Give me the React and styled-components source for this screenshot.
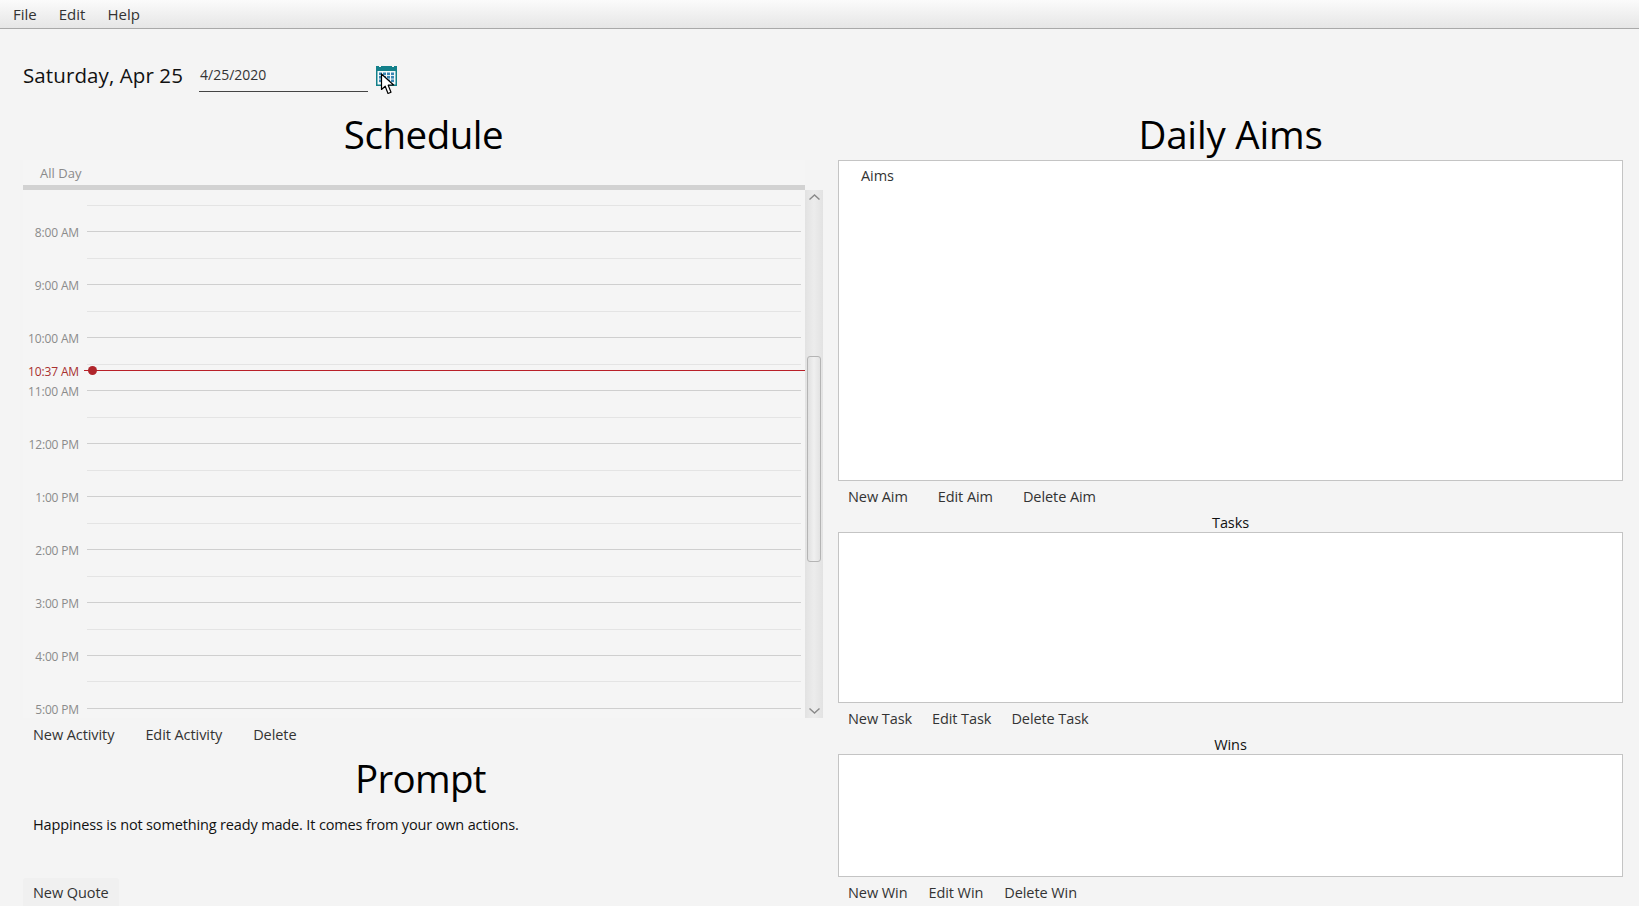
import React from "react";
import styled, { createGlobalStyle } from "styled-components";

const Global = createGlobalStyle`
  html, body { margin: 0; padding: 0; background: #f4f4f4; }
  body { font-family: "Open Sans", "Noto Sans", sans-serif; overflow: hidden; }
  #root { height: 906px; }
`;

const Page = styled.div`
  width: 1639px;
  height: 906px;
  overflow: hidden;
  display: flex;
  flex-direction: column;
  background: #f4f4f4;
`;

const MenuBar = styled.div`
  height: 29px;
  flex: none;
  display: flex;
  align-items: center;
  padding: 0 0 1px 13px;
  box-sizing: border-box;
  gap: 22px;
  background: linear-gradient(#fbfbfb, #e6e6e6);
  border-bottom: 1px solid #a9a9a9;
`;

const MenuItem = styled.span`
  font-size: 15px;
  color: #333;
  line-height: 26px;
`;

const Header = styled.div`
  height: 81px;
  flex: none;
  display: flex;
  align-items: flex-start;
  padding: 31px 0 0 23px;
  box-sizing: border-box;
`;

const DateLabel = styled.div`
  font-size: 20.5px;
  letter-spacing: 0.1px;
  line-height: 30px;
  width: 176px;
  flex: none;
  color: #111;
`;

const DateField = styled.div`
  width: 169px;
  height: 32px;
  flex: none;
  box-sizing: border-box;
  border-bottom: 1.5px solid #444;
  padding: 1px 0 0 1px;
  font-size: 14px;
  line-height: 28px;
  color: #333;
`;

const PickerButton = styled.div`
  position: relative;
  width: 21px;
  height: 21px;
  margin: 5px 0 0 8px;
  flex: none;
`;

const CursorMark = styled.svg`
  position: absolute;
  left: 4px;
  top: 8px;
`;

const Columns = styled.div`
  flex: 1;
  min-height: 0;
  display: grid;
  grid-template-columns: 800px 785px;
  column-gap: 15px;
  padding-left: 23px;
`;

const Column = styled.div`
  display: flex;
  flex-direction: column;
  min-height: 0;
`;

const Title = styled.div`
  height: 50px;
  flex: none;
  text-align: center;
  font-size: 38.5px;
  letter-spacing: ${(p) => p.$track ?? -0.5}px;
  line-height: 48px;
  color: #000;
`;

const ScheduleTitle = styled(Title)`
  margin-left: 1px;
`;

const AllDayRow = styled.div`
  height: 25px;
  width: 782px;
  flex: none;
  box-sizing: border-box;
  padding: 2px 0 0 17px;
  font-size: 13px;
  letter-spacing: 0.05px;
  line-height: 22px;
  color: #8b8b8b;
  background: #f5f5f5;
`;

const Divider = styled.div`
  width: 782px;
  height: 5px;
  flex: none;
  background: #d2d2d2;
`;

const ScheduleBody = styled.div`
  height: 528px;
  flex: none;
  display: flex;
`;

const Viewport = styled.div`
  position: relative;
  width: 782px;
  flex: none;
  overflow: hidden;
  padding-top: 15px;
  box-sizing: border-box;
  background: #f5f5f5;
`;

const Slot = styled.div`
  height: 26.47px;
  display: flex;
  align-items: flex-start;
`;

const SlotLabel = styled.div`
  width: 56px;
  flex: none;
  height: 18px;
  margin-top: -7px;
  text-align: right;
  font-size: 12px;
  letter-spacing: -0.15px;
  line-height: 18px;
  color: #8b8b8b;
`;

const SlotLine = styled.div`
  flex: 1;
  margin: 0 4px 0 8px;
  border-top: 1px solid ${(p) => (p.$major ? "#cfcfcf" : "#e4e4e4")};
`;

const NowMarker = styled.div`
  position: absolute;
  left: 0;
  right: 0;
  height: 18px;
  margin-top: -9px;
  display: flex;
  align-items: center;
`;

const NowLabel = styled.div`
  width: 56px;
  flex: none;
  padding-top: 3px;
  text-align: right;
  font-size: 12px;
  letter-spacing: -0.15px;
  line-height: 18px;
  color: #a8302f;
`;

const NowLine = styled.div`
  position: relative;
  flex: 1;
  margin-left: 5px;
  height: 1px;
  background: #b92028;
  &::before {
    content: "";
    position: absolute;
    left: 4px;
    top: -4px;
    width: 9px;
    height: 9px;
    border-radius: 50%;
    background: #b0252b;
  }
`;

const ScrollTrack = styled.div`
  width: 18px;
  flex: none;
  display: flex;
  flex-direction: column;
  align-items: center;
  background: linear-gradient(90deg, #e2e2e2, #ececec 50%, #e2e2e2);
`;

const ArrowCell = styled.div`
  height: 14px;
  flex: none;
  display: flex;
  align-items: center;
  justify-content: center;
  margin-top: ${(p) => (p.$end ? "auto" : "0")};
`;

const Thumb = styled.div`
  width: 14px;
  height: 206px;
  flex: none;
  margin-top: 152px;
  box-sizing: border-box;
  border: 1.5px solid #b4b4b4;
  border-radius: 3px;
  background: linear-gradient(90deg, #e0e0e0, #f0f0f0 50%, #e2e2e2);
`;

const ButtonRow = styled.div`
  height: ${(p) => p.$h || 32}px;
  flex: none;
  display: flex;
  align-items: center;
  gap: ${(p) => p.$gap ?? 0}px;
`;

const TextButton = styled.div`
  padding: 0 10px;
  font-size: 14.5px;
  letter-spacing: -0.08px;
  line-height: 30px;
  color: #333;
  white-space: nowrap;
`;

const PromptTitle = styled(Title)`
  height: 48px;
  margin: 3px 0 0 -5px;
  letter-spacing: -0.7px;
`;

const Quote = styled.div`
  margin-top: 11px;
  padding-left: 10px;
  font-size: 14.5px;
  letter-spacing: -0.15px;
  line-height: 24px;
  color: #111;
`;

const QuoteButton = styled(TextButton)`
  align-self: flex-start;
  margin-top: 41px;
  background: #f0f0f0;
  border-radius: 3px 3px 0 0;
`;

const ListBox = styled.div`
  height: ${(p) => p.$h}px;
  flex: none;
  box-sizing: border-box;
  background: #fff;
  border: 1px solid #c4c4c4;
  padding: 6px 0 0 22px;
  font-size: 14.5px;
  letter-spacing: -0.1px;
  line-height: 18px;
  color: #333;
`;

const SectionLabel = styled.div`
  height: 19px;
  flex: none;
  text-align: center;
  font-size: 14.5px;
  letter-spacing: -0.1px;
  line-height: 19px;
  color: #111;
`;

const CalendarIcon = () => (
  <svg width="21" height="21" viewBox="0 0 21 21">
    <rect x="0" y="1" width="21" height="20" fill="#13808a" />
    <rect x="3" y="0" width="2" height="2" fill="#f4f4f4" />
    <rect x="16" y="0" width="2" height="2" fill="#f4f4f4" />
    <rect x="1.5" y="6" width="18" height="13.5" fill="#f6fafa" />
    {[7.5, 11, 14.5].map((y) =>
      [3, 7, 11, 15].map((x) => (
        <rect key={`${x}-${y}`} x={x} y={y} width="3" height="2.6" fill="#3a86b4" />
      ))
    )}
  </svg>
);

const Chevron = ({ up }) => (
  <svg width="11" height="6" viewBox="0 0 11 6">
    <path d={up ? "M0.5 5.5 L5.5 1 L10.5 5.5" : "M0.5 0.5 L5.5 5 L10.5 0.5"} fill="none" stroke="#8a8a8a" strokeWidth="1.4" />
  </svg>
);

const hours = ["8:00 AM", "9:00 AM", "10:00 AM", "11:00 AM", "12:00 PM", "1:00 PM", "2:00 PM", "3:00 PM", "4:00 PM", "5:00 PM"];
const HOUR_HEIGHT = 52.94;
const nowTop = 15 + 26.47 + (10 + 37 / 60 - 8) * HOUR_HEIGHT + 0.5;

export default function App() {
  return (
    <Page>
      <Global />
      <MenuBar>
        <MenuItem>File</MenuItem>
        <MenuItem>Edit</MenuItem>
        <MenuItem>Help</MenuItem>
      </MenuBar>
      <Header>
        <DateLabel>Saturday, Apr 25</DateLabel>
        <DateField>4/25/2020</DateField>
        <PickerButton>
          <CalendarIcon />
          <CursorMark width="15" height="22" viewBox="0 0 15 22">
            <path d="M1.5 1 L1.5 16.5 L5.2 13.2 L8 20.5 L11 19.2 L8.2 12.2 L13.6 12 Z" fill="#fff" stroke="#000" strokeWidth="1.2" strokeLinejoin="round" />
          </CursorMark>
        </PickerButton>
      </Header>
      <Columns>
        <Column>
          <ScheduleTitle>Schedule</ScheduleTitle>
          <AllDayRow>All Day</AllDayRow>
          <Divider />
          <ScheduleBody>
            <Viewport>
              <Slot>
                <SlotLabel />
                <SlotLine />
              </Slot>
              {hours.map((h) => (
                <React.Fragment key={h}>
                  <Slot>
                    <SlotLabel>{h}</SlotLabel>
                    <SlotLine $major />
                  </Slot>
                  <Slot>
                    <SlotLabel />
                    <SlotLine />
                  </Slot>
                </React.Fragment>
              ))}
              <NowMarker style={{ top: nowTop }}>
                <NowLabel>10:37 AM</NowLabel>
                <NowLine />
              </NowMarker>
            </Viewport>
            <ScrollTrack>
              <ArrowCell><Chevron up /></ArrowCell>
              <Thumb />
              <ArrowCell $end><Chevron /></ArrowCell>
            </ScrollTrack>
          </ScheduleBody>
          <ButtonRow $h={33} $gap={11}>
            <TextButton>New Activity</TextButton>
            <TextButton>Edit Activity</TextButton>
            <TextButton>Delete</TextButton>
          </ButtonRow>
          <PromptTitle>Prompt</PromptTitle>
          <Quote>Happiness is not something ready made. It comes from your own actions.</Quote>
          <QuoteButton>New Quote</QuoteButton>
        </Column>
        <Column>
          <Title $track={-0.2}>Daily Aims</Title>
          <ListBox $h={321}>Aims</ListBox>
          <ButtonRow $gap={10}>
            <TextButton>New Aim</TextButton>
            <TextButton>Edit Aim</TextButton>
            <TextButton>Delete Aim</TextButton>
          </ButtonRow>
          <SectionLabel>Tasks</SectionLabel>
          <ListBox $h={171} />
          <ButtonRow>
            <TextButton>New Task</TextButton>
            <TextButton>Edit Task</TextButton>
            <TextButton>Delete Task</TextButton>
          </ButtonRow>
          <SectionLabel>Wins</SectionLabel>
          <ListBox $h={123} />
          <ButtonRow $h={31} $gap={1}>
            <TextButton>New Win</TextButton>
            <TextButton>Edit Win</TextButton>
            <TextButton>Delete Win</TextButton>
          </ButtonRow>
        </Column>
      </Columns>
    </Page>
  );
}
